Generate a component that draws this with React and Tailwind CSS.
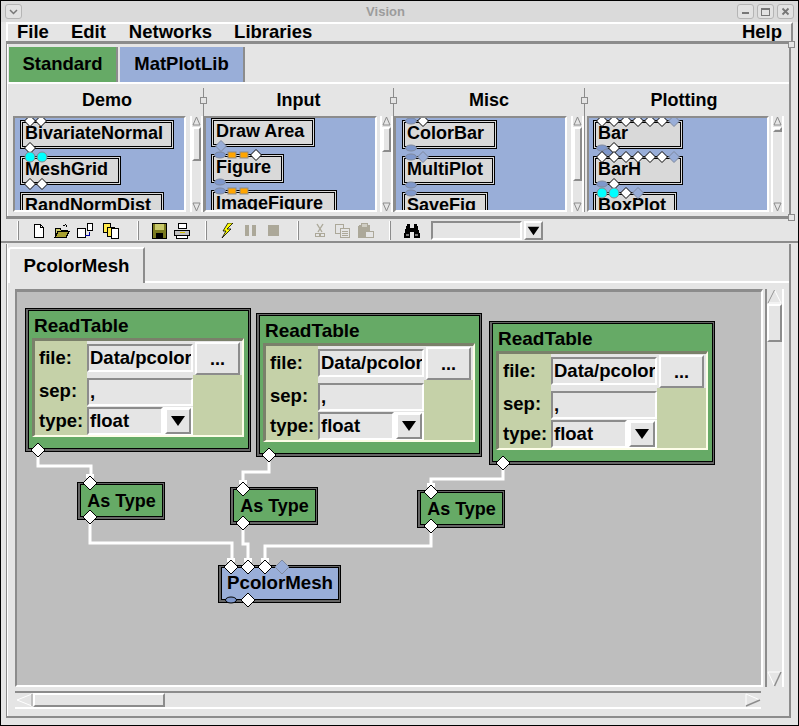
import React from "react";

const FONT = "font-['Liberation_Sans',Arial,sans-serif] font-bold";

function Port({ t, x, y, big }) {
  const r = big ? 7 : 5.5;
  if (t === "w" || t === "b")
    return (
      <polygon
        points={`${x},${y - r} ${x + r},${y} ${x},${y + r} ${x - r},${y}`}
        fill={t === "w" ? "#ffffff" : "#99aed8"}
        stroke={t === "w" ? "#000" : "#7f8a9f"}
        strokeWidth="1"
      />
    );
  if (t === "c") return <circle cx={x} cy={y} r="5" fill="#00ffff" stroke="#8a8a8a" />;
  if (t === "e") return <ellipse cx={x} cy={y} rx="5.5" ry="3" fill="#7f98cc" stroke={big ? "#000" : "#7f8a9f"} />;
  return <rect x={x - 4} y={y - 3} width="8" height="6" fill="#ffa500" stroke="#8a8a8a" />;
}

function VScrollMini({ thumb }) {
  return (
    <div className="flex h-[96px] w-[13px] flex-col border-x-2 border-white bg-[#e5e5e5]">
      <svg width="9" height="11" viewBox="0 0 9 11" className="shrink-0">
        <polygon points="4.5,1 8,9 1,9" fill="none" stroke="#8c8c8c" />
      </svg>
      <div style={{ height: thumb }} className="shrink-0 border-2 border-t-white border-l-white border-r-[#8c8c8c] border-b-[#8c8c8c]" />
      <div className="flex-1" />
      <svg width="9" height="10" viewBox="0 0 9 10" className="shrink-0">
        <polygon points="1,1 8,1 4.5,9" fill="none" stroke="#8c8c8c" />
      </svg>
    </div>
  );
}

function Item({ w, label }) {
  return (
    <div style={{ width: w }} className="flex h-[29px] shrink-0 items-center overflow-hidden border-[3px] border-double border-black bg-[#d9d9d9] pb-[3px] pl-[2px] text-[18px] leading-none text-black">
      {label}
    </div>
  );
}

function Library({ title, items, listW, pl, pt, ox, ports, thumb, gap, ml, hw }) {
  return (
    <div className={`${ml} flex flex-col`}>
      <div style={{ width: hw }} className="flex h-[32px] items-center justify-center text-[18px] text-black">
        <span>{title}</span>
      </div>
      <div className="flex" style={{ gap }}>
        <div style={{ width: listW }} className="relative h-[96px] overflow-hidden border-2 border-t-[#8c8c8c] border-l-[#8c8c8c] border-r-white border-b-white bg-[#99aed8]">
          <div className="flex flex-col gap-[7px]" style={{ paddingLeft: pl, paddingTop: pt }}>
            {items.map((i) => (
              <Item key={i[0]} label={i[0]} w={i[1]} />
            ))}
          </div>
          <svg className="absolute left-0 top-0" width={listW - 4} height="92" viewBox={`${ox} 118 ${listW - 4} 92`}>
            {ports.map((p, k) => (
              <Port key={k} t={p[0]} x={p[1]} y={p[2]} />
            ))}
          </svg>
        </div>
        <VScrollMini thumb={thumb} />
      </div>
    </div>
  );
}

function Sash() {
  return (
    <div className="relative mt-[4px] h-[124px] w-px bg-[#8c8c8c]">
      <div className="absolute left-[-3px] top-[9px] h-[7px] w-[7px] border border-[#8c8c8c] bg-[#e5e5e5]" />
    </div>
  );
}

const Sep = ({ ml }) => <div className={`${ml} h-[19px] w-[2px] border-r border-[#8c8c8c] bg-white`} />;

function Ico({ ml, w, children }) {
  return (
    <svg className={`${ml} shrink-0`} width={w} height="16" viewBox={`0 0 ${w} 16`} shapeRendering="crispEdges">
      {children}
    </svg>
  );
}

function ArrowBtn({ cls }) {
  return (
    <div className={`${cls} flex shrink-0 items-center justify-center border-2 border-t-white border-l-white border-r-[#8c8c8c] border-b-[#8c8c8c] bg-[#e5e5e5]`}>
      <svg width="18" height="12" viewBox="0 0 18 12" className="max-w-full"><polygon points="2,1 16,1 9,11" fill="#000" /></svg>
    </div>
  );
}

function Toolbar() {
  return (
    <div className="flex h-[24px] items-center border-b-2 border-[#8c8c8c] pl-[16px] pt-px">
      <Sep ml="ml-0" />
      <Ico ml="ml-[14px]" w={12}><path d="M1.5 1.5h6l3 3v10h-9z" fill="#fff" stroke="#000" /><path d="M7.5 1.5v3h3" fill="none" stroke="#000" /></Ico>
      <Ico ml="ml-[9px]" w={16}><path d="M1 5h5l1 2h6v2H4l-3 5.5z" fill="#c9c96a" stroke="#000" /><path d="M1 14.5l3-6h11l-3 6z" fill="#a8a030" stroke="#000" /><path d="M9 3c2-2 4-1 4 1" fill="none" stroke="#000" /></Ico>
      <Ico ml="ml-[7px]" w={16}><rect x="0.5" y="5.5" width="8" height="9" fill="#fff" stroke="#000" /><rect x="10.5" y="0.5" width="5" height="7" fill="#fff" stroke="#000" /><path d="M12 9v3H8" fill="none" stroke="#0000a0" /></Ico>
      <Ico ml="ml-[10px]" w={16}><rect x="0.5" y="0.5" width="7" height="9" fill="#ffe94a" stroke="#000" /><rect x="4.5" y="4.5" width="7" height="9" fill="#ffe94a" stroke="#000" /><rect x="8.5" y="5.5" width="7" height="10" fill="#fff" stroke="#000" /></Ico>
      <Sep ml="ml-[18px]" />
      <Ico ml="ml-[13px]" w={15}><rect x="0.5" y="0.5" width="14" height="15" fill="#7a7a20" stroke="#000" /><rect x="3" y="1" width="9" height="6" fill="#c9c96a" /><rect x="4" y="10" width="7" height="5" fill="#000" /></Ico>
      <Ico ml="ml-[7px]" w={16}><rect x="4.5" y="0.5" width="8" height="5" fill="#fff" stroke="#000" /><path d="M0.5 7.5h15v5h-15z" fill="#c0c0c0" stroke="#000" /><rect x="2.5" y="12.5" width="11" height="3" fill="#fff" stroke="#000" /><rect x="6" y="9" width="5" height="1" fill="#d4c000" /></Ico>
      <Sep ml="ml-[15px]" />
      <Ico ml="ml-[14px]" w={13}><path d="M12 0L6 6h4L1 15l4-7H2l5-8z" fill="#ffff00" stroke="#000" strokeWidth="0.8" shapeRendering="auto" /></Ico>
      <Ico ml="ml-[11px]" w={12}><rect x="0" y="2" width="4" height="11" fill="#aca899" /><rect x="7" y="2" width="4" height="11" fill="#aca899" /></Ico>
      <Ico ml="ml-[11px]" w={12}><rect x="0" y="2" width="11" height="11" fill="#aca899" /></Ico>
      <Sep ml="ml-[17px]" />
      <Ico ml="ml-[16px]" w={10}><path d="M2 1l5 8M8 1L3 9" stroke="#aca899" strokeWidth="1.4" fill="none" shapeRendering="auto" /><circle cx="2.5" cy="12" r="2" fill="none" stroke="#aca899" /><circle cx="7.5" cy="12" r="2" fill="none" stroke="#aca899" /></Ico>
      <Ico ml="ml-[10px]" w={15}><rect x="0.5" y="1.5" width="8" height="9" fill="#e5e5e5" stroke="#aca899" /><rect x="5.5" y="5.5" width="9" height="9" fill="#e5e5e5" stroke="#aca899" /><path d="M7 8h6M7 10h6M7 12h6" stroke="#aca899" /></Ico>
      <Ico ml="ml-[8px]" w={16}><rect x="0" y="2" width="12" height="13" rx="2" fill="#aca899" /><rect x="3" y="0" width="6" height="4" fill="#cfcdc3" stroke="#aca899" /><rect x="7.5" y="8.5" width="8" height="6" fill="#e5e5e5" stroke="#aca899" /></Ico>
      <Sep ml="ml-[15px]" />
      <Ico ml="ml-[13px]" w={16}><path d="M3 1h3v4h4V1h3l3 11v3H10V9H6v6H0v-3z" fill="#000" /><rect x="2" y="11" width="3" height="2" fill="#777" /><rect x="11" y="11" width="3" height="2" fill="#777" /></Ico>
      <div className="ml-[11px] h-[19px] w-[91px] border-2 border-t-[#8c8c8c] border-l-[#8c8c8c] border-r-white border-b-white bg-[#e5e5e5]" />
      <ArrowBtn cls="ml-[2px] h-[19px] w-[19px]" />
    </div>
  );
}

const Cell = "flex items-center pl-[4px] text-[18.5px] leading-none";
const Entry = "h-[28px] overflow-hidden whitespace-nowrap border-2 border-t-[#8c8c8c] border-l-[#8c8c8c] border-r-white border-b-white bg-[#e5e5e5] pl-[1px] text-[18.5px] leading-[24px]";

function ReadTable({ pos }) {
  return (
    <div className={`absolute ${pos} h-[144px] w-[226px] border border-black bg-[#666666] pb-[2px] pl-[2px] pr-px pt-px`}>
      <div className="h-full border border-black bg-[#66aa66] pl-[3px]">
        <div className="flex h-[27px] items-center pl-[2px] pt-px text-[19px] leading-none text-black">ReadTable</div>
        <div className="h-[99px] w-[212px] border-[3px] border-b-2 border-r-2 border-t-[#7a806a] border-l-[#7a806a] border-r-[#fdfde8] border-b-[#fdfde8] bg-[#c5d1a8]">
          <div className="grid h-full grid-cols-[52px_106px_49px] grid-rows-[34px_32px_28px]">
            <div className={Cell}>file:</div>
            <div className="bg-[#e5e5e5] pt-[3px]"><div className={Entry}>Data/pcolor</div></div>
            <div className="flex items-start justify-end bg-[#e5e5e5] pr-[2px] pt-px">
              <div className="flex h-[33px] w-[45px] items-center justify-center border-2 border-t-white border-l-white border-r-[#8c8c8c] border-b-[#8c8c8c] bg-[#e5e5e5] text-[18px] leading-none">...</div>
            </div>
            <div className={Cell}>sep:</div>
            <div className="bg-[#e5e5e5] pt-[3px]"><div className={Entry}>,</div></div>
            <div className="row-span-2 bg-[#c5d1a8]" />
            <div className={Cell}>type:</div>
            <div className="flex justify-between bg-white pr-[2px]">
              <div className={`w-[76px] ${Entry}`}>float</div>
              <ArrowBtn cls="mt-px h-[26px] w-[26px]" />
            </div>
          </div>
        </div>
      </div>
    </div>
  );
}

function Mod({ pos, w, label, blue, big }) {
  return (
    <div style={{ width: w }} className={`absolute ${pos} h-[38px] border border-black bg-[#666666] pb-[2px] pl-[2px] pr-px pt-px`}>
      <div className={`flex h-full items-center justify-center border border-black ${blue ? "bg-[#99aed8]" : "bg-[#66aa66]"} ${big ? "text-[18.7px]" : "text-[18px]"} leading-none text-black`}>
        {label}
      </div>
    </div>
  );
}

function Canvas() {
  const wires = [
    "M38 451V467H91V484",
    "M269 456V473H243V490",
    "M503 464V480H431V493",
    "M90 518V544H232V568",
    "M243 524V545H248V568",
    "M431 527V547H265V568",
  ];
  const heads = [[90, 484], [243, 490], [431, 493], [231, 568], [248, 568], [265, 568]];
  return (
    <div className="relative h-[398px] w-[748px] overflow-hidden border-2 border-t-[3px] border-t-[#8c8c8c] border-l-[#8c8c8c] border-r-white border-b-white bg-[#bebebe]">
      <ReadTable pos="left-[8px] top-[16px]" />
      <ReadTable pos="left-[239px] top-[21px]" />
      <ReadTable pos="left-[472px] top-[29px]" />
      <Mod pos="left-[60px] top-[190px]" w={88} label="As Type" />
      <Mod pos="left-[213px] top-[195px]" w={88} label="As Type" />
      <Mod pos="left-[400px] top-[198px]" w={88} label="As Type" />
      <Mod pos="left-[201px] top-[273px]" w={123} label="PcolorMesh" blue big />
      <svg className="absolute left-0 top-0" width="744" height="393" viewBox="17 293 744 393">
        {wires.map((d) => (
          <path key={d} d={d} fill="none" stroke="#fff" strokeWidth="3" />
        ))}
        {heads.map(([x, y]) => (
          <rect key={`h${x}-${y}`} x={x - 4} y={y - 9} width="8" height="4" fill="#fff" />
        ))}
        {[[38, 451], [269, 456], [503, 464], [90, 484], [90, 518], [243, 490], [243, 524], [431, 493], [431, 527], [231, 568], [248, 568], [265, 568], [248, 601]].map(([x, y]) => (
          <Port key={`${x}-${y}`} t="w" x={x} y={y} big />
        ))}
        <Port t="b" x={282} y={568} big />
        <Port t="e" x={231} y={601} big />
      </svg>
    </div>
  );
}

function VScroll() {
  return (
    <div className="ml-[2px] flex h-[398px] w-[19px] flex-col border-x-2 border-l-[#8c8c8c] border-r-white bg-[#e5e5e5]">
      <svg width="15" height="15" viewBox="0 0 15 15" className="shrink-0"><polygon points="7.5,1 14,14 1,14" fill="none" stroke="#fff" /><path d="M7.5 1L1 14" stroke="#8c8c8c" /></svg>
      <div className="h-[38px] shrink-0 border-2 border-t-white border-l-white border-r-[#8c8c8c] border-b-[#8c8c8c]" />
      <div className="flex-1" />
      <svg width="15" height="16" viewBox="0 0 15 16" className="shrink-0"><polygon points="1,1 14,1 7.5,15" fill="none" stroke="#fff" /><path d="M14 1L7.5 15" stroke="#8c8c8c" strokeWidth="1.5" /></svg>
    </div>
  );
}

function HScroll() {
  return (
    <div className="ml-[7px] mt-[4px] flex h-[18px] w-[746px] items-stretch border-y-2 border-t-[#8c8c8c] border-b-white bg-[#e5e5e5]">
      <svg width="18" height="14" viewBox="0 0 18 14" className="shrink-0"><polygon points="2,7 17,1 17,13" fill="none" stroke="#fff" /><path d="M17 1V13" stroke="#8c8c8c" /></svg>
      <div className="w-[132px] border-2 border-t-white border-l-white border-r-[#8c8c8c] border-b-[#8c8c8c]" />
      <div className="flex-1" />
      <svg width="16" height="14" viewBox="0 0 16 14" className="shrink-0"><polygon points="1,1 15,7 1,13" fill="none" stroke="#fff" /><path d="M15 7L1 13" stroke="#8c8c8c" strokeWidth="1.5" /></svg>
    </div>
  );
}

function WinBtn({ children }) {
  return (
    <div className="flex h-[15px] w-[17px] items-center justify-center rounded-[3px] border border-[#b5b5b5] bg-[#e2e2e2]">
      {children}
    </div>
  );
}

export default function App() {
  return (
    <div className={`${FONT} box-border flex h-[726px] w-[799px] flex-col overflow-hidden border border-black bg-[#e5e5e5] text-black`}>
      <div className="relative flex h-[21px] shrink-0 items-center justify-center bg-[#dadada] pr-[28px] text-[13px] text-[#9c9c9c]">
        Vision
        <div className="absolute left-[4px] top-[3px]">
          <WinBtn><svg width="9" height="6" viewBox="0 0 9 6"><path d="M1 1l3.5 3.5L8 1" fill="none" stroke="#777" strokeWidth="1.5" /></svg></WinBtn>
        </div>
        <div className="absolute right-[4px] top-[3px] flex gap-[3px]">
          <WinBtn><div className="mt-[3px] h-[2px] w-[7px] bg-[#777]" /></WinBtn>
          <WinBtn><div className="h-[8px] w-[9px] border border-t-2 border-[#777]" /></WinBtn>
          <WinBtn><svg width="9" height="9" viewBox="0 0 9 9"><path d="M1.5 1.5l6 6M7.5 1.5l-6 6" stroke="#777" strokeWidth="1.8" /></svg></WinBtn>
        </div>
      </div>

      <div className="mx-[5px] flex h-[19px] shrink-0 items-center border-x-2 border-t-2 border-l-white border-r-[#8c8c8c] border-t-white pb-px pl-[9px] pr-[9px] text-[18.5px] leading-none">
        <span>File</span>
        <span className="ml-[22px]">Edit</span>
        <span className="ml-[23px]">Networks</span>
        <span className="ml-[22px]">Libraries</span>
        <span className="ml-auto">Help</span>
      </div>

      <div className="relative ml-[5px] mr-[7px] h-[178px] shrink-0 border-b-[3px] border-l border-r-2 border-t-[3px] border-[#8c8c8c] pl-px shadow-[inset_1px_0_0_#ffffff]">
        <div className="absolute right-[-6px] top-[-3px] h-[7px] w-[7px] border border-[#8c8c8c] bg-[#e5e5e5]" />
        <div className="absolute bottom-[-5px] right-[-6px] h-[7px] w-[7px] border border-[#8c8c8c] bg-[#e5e5e5]" />
        <div className="flex h-[40px] items-end border-b-2 border-white pl-px pt-[3px]">
          <div className="flex h-[35px] w-[109px] items-center justify-center border-r-2 border-[#8c8c8c] bg-[#66aa66] text-[18.5px] leading-none">Standard</div>
          <div className="ml-[2px] flex h-[35px] w-[125px] items-center justify-center border-r-2 border-[#8c8c8c] bg-[#99aed8] text-[18.5px] leading-none">MatPlotLib</div>
        </div>
        <div className="flex pl-[5px]">
          <Library
            title="Demo" hw={188} listW={173} gap={4} ml="ml-0" pl={5} pt={2} ox={15} thumb={34}
            items={[["BivariateNormal", 154], ["MeshGrid", 101], ["RandNormDist", 144]]}
            ports={[["w", 30, 121], ["w", 41, 121], ["w", 30, 148], ["c", 30, 157], ["c", 42, 157], ["w", 30, 184], ["w", 42, 184]]}
          />
          <Sash />
          <Library
            title="Input" hw={189} listW={173} gap={3} ml="ml-0" pl={5} pt={0} ox={206} thumb={25}
            items={[["Draw Area", 104], ["Figure", 73], ["ImageFigure", 126]]}
            ports={[["b", 221, 146], ["e", 220, 155], ["o", 232, 155], ["o", 244, 155], ["w", 256, 155], ["e", 220, 182], ["e", 220, 191], ["o", 232, 191], ["o", 244, 191]]}
          />
          <Sash />
          <Library
            title="Misc" hw={190} listW={173} gap={4} ml="ml-0" pl={6} pt={2} ox={396} thumb={54}
            items={[["ColorBar", 95], ["MultiPlot", 93], ["SaveFig", 86]]}
            ports={[["e", 411, 121], ["w", 423, 121], ["e", 411, 148], ["e", 411, 157], ["b", 423, 157], ["e", 411, 185], ["e", 411, 193]]}
          />
          <Sash />
          <Library
            title="Plotting" hw={194} listW={182} gap={2} ml="ml-[2px]" pl={4} pt={2} ox={589} thumb={5}
            items={[["Bar", 90], ["BarH", 90], ["BoxPlot", 84]]}
            ports={[
              ["w", 602, 121], ["w", 614, 121], ["w", 626, 121], ["w", 638, 121], ["w", 650, 121], ["w", 662, 121], ["b", 674, 121],
              ["e", 602, 148], ["e", 608, 152], ["w", 614, 148],
              ["w", 602, 157], ["w", 614, 157], ["w", 626, 157], ["w", 638, 157], ["w", 650, 157], ["w", 662, 157], ["b", 674, 157],
              ["e", 602, 184], ["w", 614, 184],
              ["c", 602, 193], ["c", 614, 193], ["w", 626, 193], ["b", 638, 193],
            ]}
          />
        </div>
      </div>

      <div className="shrink-0"><Toolbar /></div>

      <div className="ml-[5px] mr-[7px] mt-px h-[474px] shrink-0 border-b-2 border-l border-r-2 border-[#8c8c8c] pl-px shadow-[inset_1px_0_0_#ffffff]">
        <div className="flex h-[39px] items-end">
          <div className="flex h-[36px] w-[137px] items-center justify-center rounded-tl-[3px] border-l-2 border-r-2 border-t-2 border-l-white border-r-[#8c8c8c] border-t-white text-[18.7px] leading-none">PcolorMesh</div>
          <div className="h-[2px] flex-1 bg-white" />
        </div>
        <div className="flex pl-[7px] pt-[6px]">
          <Canvas />
          <VScroll />
        </div>
        <HScroll />
      </div>
    </div>
  );
}
